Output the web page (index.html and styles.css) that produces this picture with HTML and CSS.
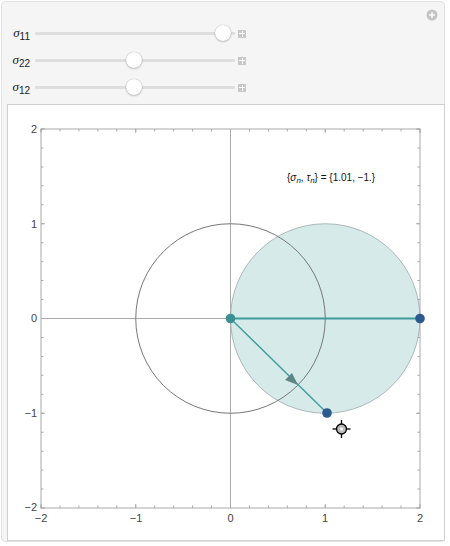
FILE: index.html
```html
<!DOCTYPE html>
<html>
<head>
<meta charset="utf-8">
<link rel="stylesheet" href="styles.css">
</head>
<body>
<div class="panel">
  <div class="topbar">
    <svg class="addicon" width="12" height="12" viewBox="0 0 12 12"><circle cx="6" cy="6" r="5.5" fill="#c4c4c4"/><path d="M6 3.2v5.6M3.2 6h5.6" stroke="#fff" stroke-width="1.6"/></svg>
  </div>
  <div class="controls">
    <div class="row">
      <span class="lbl"><i>σ</i><sub>11</sub></span>
      <div class="track"><div class="thumb" style="left: 188px"></div></div>
      <span class="plus"></span>
    </div>
    <div class="row">
      <span class="lbl"><i>σ</i><sub>22</sub></span>
      <div class="track"><div class="thumb" style="left: 99px"></div></div>
      <span class="plus"></span>
    </div>
    <div class="row">
      <span class="lbl"><i>σ</i><sub>12</sub></span>
      <div class="track"><div class="thumb" style="left: 99px"></div></div>
      <span class="plus"></span>
    </div>
  </div>
  <div class="plotbox">
    <svg class="plot" width="436" height="435" viewBox="7 104 436 435">
      <circle cx="324.25" cy="317.5" r="94.75" fill="#d5eae9" stroke="#9aa" stroke-width="0.8"/>
      <line x1="229.5" y1="128" x2="229.5" y2="507" stroke="#aaa" stroke-width="1"/>
      <line x1="40" y1="317.5" x2="419" y2="317.5" stroke="#aaa" stroke-width="1"/>
      <circle cx="229.5" cy="317.5" r="94.75" fill="none" stroke="#777" stroke-width="1"/>
      <rect x="40" y="128" width="379" height="379" fill="none" stroke="#aaa" stroke-width="1"/>
      <g class="minor">
        <line x1="39.5" y1="505.75" x2="420" y2="505.75"/>
        <line x1="39.5" y1="129.25" x2="420" y2="129.25"/>
        <line x1="41.25" y1="507.5" x2="41.25" y2="127"/>
        <line x1="417.75" y1="507.5" x2="417.75" y2="127"/>
      </g>
      <path class="major" d="M40 507v-4M134.75 507v-4M229.5 507v-4M324.25 507v-4M419 507v-4M40 128v4M134.75 128v4M229.5 128v4M324.25 128v4M419 128v4M40 128h4M40 222.75h4M40 317.5h4M40 412.25h4M40 507h4M419 128h-4M419 222.75h-4M419 317.5h-4M419 412.25h-4M419 507h-4"/>
      <line x1="229.5" y1="317.5" x2="419" y2="317.5" stroke="#3f9c9c" stroke-width="1.8"/>
      <line x1="229.5" y1="317.5" x2="326" y2="412" stroke="#3f9c9c" stroke-width="1.3"/>
      <path d="M297 384 L284 379 L291 372 Z" fill="#5f8585"/>
      <circle cx="229.5" cy="317.5" r="4.8" fill="#3a8f90"/>
      <circle cx="419" cy="317.5" r="4.8" fill="#2d5a8c"/>
      <circle cx="326" cy="412" r="4.8" fill="#2d5a8c"/>
      <g transform="translate(340.5 428)">
        <line x1="-9" y1="0" x2="9" y2="0" stroke="#000" stroke-width="1.3"/>
        <line x1="0" y1="-9" x2="0" y2="9" stroke="#000" stroke-width="1.3"/>
        <circle r="5" fill="#bbb" stroke="#000" stroke-width="1.3"/>
        <circle r="1.5" fill="#fff"/>
      </g>
      <g class="ticklbl">
        <text x="36" y="132" text-anchor="end">2</text>
        <text x="36" y="227" text-anchor="end">1</text>
        <text x="36" y="321" text-anchor="end">0</text>
        <text x="36" y="416" text-anchor="end">−1</text>
        <text x="36" y="510" text-anchor="end">−2</text>
        <text x="40" y="521" text-anchor="middle">−2</text>
        <text x="135" y="521" text-anchor="middle">−1</text>
        <text x="229.5" y="521" text-anchor="middle">0</text>
        <text x="324" y="521" text-anchor="middle">1</text>
        <text x="419" y="521" text-anchor="middle">2</text>
      </g>
      <text class="note" x="286" y="180">{<tspan class="it">σ</tspan><tspan class="it sub" dy="2">n</tspan><tspan dy="-2">, </tspan><tspan class="it">τ</tspan><tspan class="it sub" dy="2">n</tspan><tspan dy="-2">} = {1.01, −1.}</tspan></text>
    </svg>
  </div>
</div>
</body>
</html>
```
FILE: styles.css
```css
html, body {
  margin: 0;
  padding: 0;
  background: #ffffff;
}
.panel {
  width: 444px;
  height: 541px;
  margin: 1px 0 0 1px;
  background: #f5f5f5;
  border: 1px solid #e2e2e2;
  border-radius: 4px;
  box-sizing: border-box;
  position: relative;
  font-family: "Liberation Sans", Arial, sans-serif;
}
.topbar {
  height: 18px;
  display: flex;
  justify-content: flex-end;
  padding: 7px 6px 0 0;
  box-sizing: border-box;
}
.addicon { display: block; }
.controls {
  display: flex;
  flex-direction: column;
  gap: 10px;
  padding-top: 5px;
}
.row {
  display: flex;
  align-items: center;
  height: 17px;
}
.lbl {
  width: 28px;
  text-align: right;
  font-size: 12px;
  color: #222;
  line-height: 1;
}
.lbl i {
  font-family: "Liberation Serif", "Times New Roman", serif;
  font-size: 13px;
}
.lbl sub {
  font-size: 10px;
  vertical-align: -3px;
}
.track {
  position: relative;
  margin-left: 5px;
  width: 200px;
  height: 3px;
  background: #dedede;
  border-radius: 2px;
}
.thumb {
  position: absolute;
  top: -7px;
  width: 16px;
  height: 16px;
  margin-left: -8px;
  border-radius: 50%;
  background: #fff;
  box-shadow: 0 0 1px rgba(0,0,0,0.35), 0 1px 2px rgba(0,0,0,0.2);
}
.plus {
  margin-left: 3px;
  width: 8px;
  height: 8px;
  background: #c8c8c8;
  position: relative;
}
.plus::before, .plus::after {
  content: "";
  position: absolute;
  background: #fff;
}
.plus::before { left: 1px; right: 1px; top: 3.5px; height: 1px; }
.plus::after { top: 1px; bottom: 1px; left: 3.5px; width: 1px; }
.plotbox {
  position: absolute;
  left: 5px;
  top: 102px;
  width: 438px;
  height: 437px;
  background: #fff;
  border: 1px solid #d0d0d0;
  box-sizing: border-box;
}
.plot { display: block; }
.minor line {
  stroke: #aaa;
  stroke-width: 2.5;
  stroke-dasharray: 1 17.95;
}
.major {
  stroke: #aaa;
  stroke-width: 1;
  fill: none;
}
.ticklbl text {
  font-family: "Liberation Sans", Arial, sans-serif;
  font-size: 11px;
  fill: #444;
}
.note {
  font-family: "Liberation Sans", Arial, sans-serif;
  font-size: 10px;
  fill: #111;
}
.note .it { font-style: italic; }
.note .sub { font-size: 8px; }
```
